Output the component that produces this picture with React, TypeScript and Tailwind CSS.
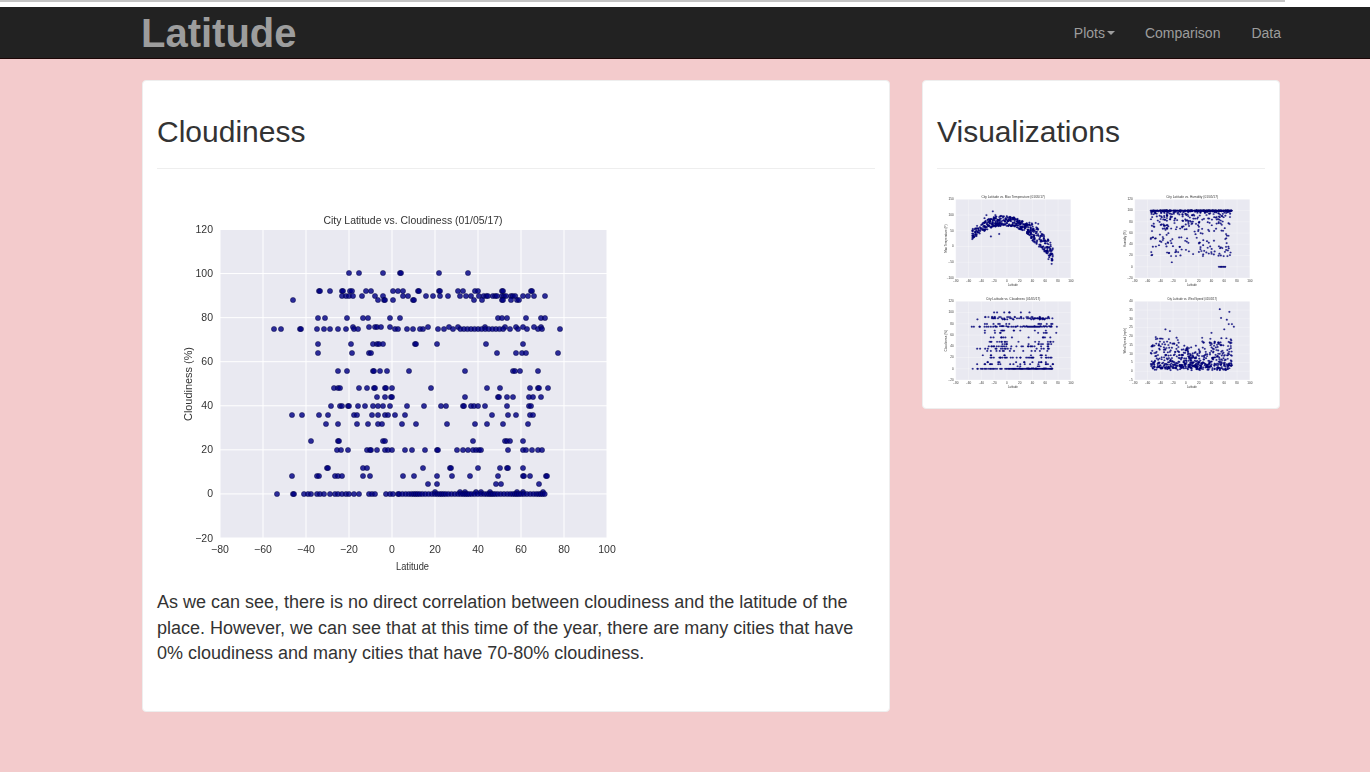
import React from "react";

type Pt = [number, number];

// pixel rows of the cloudiness scatter, read off the page (y, then x positions)
const run = (from: number, to: number, step: number) => {
  const out: number[] = [];
  for (let x = from; x <= to; x += step) out.push(x + 1.1 * Math.sin(x * 7));
  return out;
};

const rows: [number, number[]][] = [
  [273, [349, 359, 383, 400, 401, 439, 468]],
  [291, [319, 320, 330, 342, 343, 350, 352, 366, 371, 393, 398, 403, 418, 419, 439, 440, 458, 463, 475, 478, 502, 503, 531, 532]],
  [296, [342, 346, 349, 353, 362, 375, 383, 403, 408, 426, 433, 440, 448, 460, 466, 471, ...run(480, 517, 3), 523, 528, 534, 545]],
  [300, [293, 378, 384, 385, 393, 413, 414, 474, 482, 502, 503, 511, 517, 519]],
  [318, [318, 325, 347, 363, 368, 390, 400, 498, 502, 507, 526, 541, 545]],
  [327, [353, 369, 375, 377, 381, 390, 428, 449, 458, 485, 505, 516, 523, 534, 541]],
  [329, [274, 281, 300, 301, 317, 324, 330, 338, 346, 354, 358, 395, 398, 407, 413, 420, 423, 438, 444, 453, ...run(461, 505, 3.6), 510, 518, 527, 538, 542, 560]],
  [344, [318, 351, 373, 377, 379, 383, 415, 416, 437, 486, 523]],
  [353, [318, 352, 369, 371, 497, 516, 522, 526, 558]],
  [371, [338, 347, 373, 374, 380, 387, 409, 465, 513, 515, 520, 538]],
  [388, [334, 338, 340, 359, 367, 374, 375, 385, 386, 392, 431, 487, 500, 530, 538, 539, 548]],
  [397, [377, 385, 391, 392, 465, 498, 499, 507, 513, 529, 533, 541]],
  [406, [331, 340, 342, 348, 349, 358, 365, 373, 378, 383, 390, 407, 424, 441, 446, 463, 464, 471, 474, 478, 485, 507, 529, 531]],
  [415, [292, 302, 319, 328, 354, 357, 372, 378, 385, 388, 395, 405, 492, 508, 516, 530, 533]],
  [424, [326, 338, 357, 368, 378, 382, 402, 416, 447, 475, 487, 503, 528]],
  [441, [311, 338, 339, 383, 385, 473, 505, 507, 510, 523]],
  [450, [337, 341, 348, 367, 370, 371, 377, 385, 388, 392, 405, 412, 425, 437, 438, 457, 463, 468, 473, 476, 479, 481, 508, 523, 526, 532, 538, 542]],
  [468, [327, 328, 363, 367, 423, 450, 451, 478, 500, 507, 508, 523]],
  [476, [292, 317, 319, 335, 338, 342, 363, 370, 403, 414, 437, 452, 470, 498, 523, 524, 530, 546, 547]],
  [484, [428, 437, 496, 501, 539]],
  [492, [435, 460, 465, 476, 481, 490, 517, 523, 543]],
  [494, [277, 293, 294, 304, 308, 311, 317, 320, 324, 330, 335, 338, 342, 346, 349, 354, 359, 369, 372, 375, 386, 390, 393, 398, ...run(400, 547, 2.6)]],
];

const cloudiness: Pt[] = rows.flatMap(([y, xs]) => xs.map((x): Pt => [x - 157, y - 189]));

// the thumbnails are too small to read dot by dot, so these are seeded
function seeded(seed: number) {
  let s = seed;
  return () => {
    s = (s + 0x6d2b79f5) | 0;
    let t = Math.imul(s ^ (s >>> 15), 1 | s);
    t = (t + Math.imul(t ^ (t >>> 7), 61 | t)) ^ t;
    return ((t ^ (t >>> 14)) >>> 0) / 4294967296;
  };
}

const toBox = (lat: number, v: number, min: number, max: number): Pt => [
  63 + (lat + 80) * 2.15,
  40.5 + ((max - v) * 308.5) / (max - min),
];

const latOf = (r: () => number) => (r() < 0.12 ? -55 + r() * 20 : -35 + r() * 107);

const temperature: Pt[] = (() => {
  const r = seeded(11);
  const pts = Array.from({ length: 520 }, () => {
    const lat = latOf(r);
    const spread = lat > 35 ? 55 : 32;
    return toBox(lat, 82 - 0.018 * (lat + 5) * (lat + 5) + (r() - 0.5) * spread, -100, 150);
  });
  const extra: [number, number][] = [[-22, 112], [-18, 100], [-32, 100], [-35, 90], [45, 75], [49, 72], [-25, 32], [-12, 40], [70, -55], [65, -40]];
  return [...pts, ...extra.map(([a, b]) => toBox(a, b, -100, 150))];
})();

const humidity: Pt[] = (() => {
  const r = seeded(23);
  const pts = Array.from({ length: 540 }, () => {
    const lat = latOf(r);
    const k = r();
    const v = k < 0.28 ? 100 : 100 - Math.pow(r(), 2.2) * 82;
    return toBox(lat, v, -20, 120);
  });
  return [...pts, ...run(52, 62, 1.4).map((lat) => toBox(lat, 0, -20, 120)), toBox(-22, 8, -20, 120)];
})();

const wind: Pt[] = (() => {
  const r = seeded(37);
  const pts = Array.from({ length: 560 }, () => {
    const lat = latOf(r);
    const edge = lat < -10 || lat > 25 ? 1 : 0.7;
    return toBox(lat, 0.6 + r() * 3 + Math.pow(r(), 2.4) * 17 * edge, -5, 40);
  });
  const extra: [number, number][] = [[53, 35.5], [68, 34], [55, 30.5], [64, 29.5], [67, 27], [72, 27], [75, 25.5], [-32, 24], [-25, 23], [40, 22], [60, 24]];
  return [...pts, ...extra.map(([a, b]) => toBox(a, b, -5, 40))];
})();

type ChartProps = {
  title: string;
  titleLen: number;
  yLabel: string;
  yLabelLen: number;
  yTicks: number[];
  points: Pt[];
  dot: number;
  className: string;
};

const xTicks = [-80, -60, -40, -20, 0, 20, 40, 60, 80, 100];
const label = (n: number) => (n < 0 ? `\u2212${-n}` : `${n}`);

const Chart = ({ title, titleLen, yLabel, yLabelLen, yTicks, points, dot, className }: ChartProps) => {
  const yAt = (i: number) => 40.5 + (i * 308.5) / (yTicks.length - 1);
  return (
    <svg viewBox="0 0 501 400" preserveAspectRatio="none" className={className}>
      <g fontFamily="'Liberation Sans', Arial, sans-serif" fontSize="10.5" fill="#333">
        <rect x="63" y="40.5" width="387" height="308.5" fill="#e9e9f1" />
        {xTicks.map((t, i) => (
          <line key={t} x1={63 + i * 43} x2={63 + i * 43} y1="40.5" y2="349" stroke="#fff" strokeWidth="1" />
        ))}
        {yTicks.map((t, i) => (
          <line key={t} x1="63" x2="450" y1={yAt(i)} y2={yAt(i)} stroke="#fff" strokeWidth="1" />
        ))}
        {xTicks.map((t, i) => (
          <text key={t} x={63 + i * 43} y="364" textAnchor="middle">
            {label(t)}
          </text>
        ))}
        {[...yTicks].reverse().map((t, i) => (
          <text key={t} x="56" y={yAt(i) + 3.5} textAnchor="end">
            {label(t)}
          </text>
        ))}
        <text x="256" y="35" textAnchor="middle" fontSize="11.5" textLength={titleLen} lengthAdjust="spacingAndGlyphs">
          {title}
        </text>
        <text x="255.5" y="381" textAnchor="middle" fontSize="11.5" textLength="33" lengthAdjust="spacingAndGlyphs">
          Latitude
        </text>
        <text
          transform="translate(35 195) rotate(-90)"
          textAnchor="middle"
          fontSize="11.5"
          textLength={yLabelLen}
          lengthAdjust="spacingAndGlyphs"
        >
          {yLabel}
        </text>
        {points.map(([x, y], i) => (
          <circle
            key={i}
            cx={x}
            cy={y}
            r={dot}
            fill="#000085"
            fillOpacity="0.82"
            stroke="#00003a"
            strokeOpacity="0.7"
            strokeWidth="0.6"
          />
        ))}
      </g>
    </svg>
  );
};

const cloudTicks = [-20, 0, 20, 40, 60, 80, 100, 120];

const NavLink = ({ children }: { children: React.ReactNode }) => (
  <a className="text-sm text-[#9d9d9d]">{children}</a>
);

const thumbClass = "block h-[102px] w-[149px] blur-[0.5px]";

export default function App() {
  return (
    <div className="min-h-screen bg-[#f3cbcc] font-['Liberation_Sans',Arial,sans-serif] text-[#333]">
      <div className="h-[7px] bg-white">
        <div className="h-[2px] w-[1285px] bg-[#c4c4c4]" />
      </div>
      <nav className="h-[52px] border-b border-[#1c0606] bg-[#222]">
        <div className="ml-[142px] flex h-full w-[1139px] items-center justify-between">
          <a className="-ml-px text-[40px] leading-[50px] font-bold text-[#9d9d9d]">Latitude</a>
          <div className="flex items-center gap-[30px]">
            <div className="flex items-center gap-[2px]">
              <NavLink>Plots</NavLink>
              <span className="mt-[1px] h-0 w-0 border-x-4 border-t-4 border-x-transparent border-t-[#9d9d9d]" />
            </div>
            <NavLink>Comparison</NavLink>
            <div className="ml-px">
              <NavLink>Data</NavLink>
            </div>
          </div>
        </div>
      </nav>

      <div className="mt-[21px] ml-[142px] flex items-start gap-[32px]">
        <section className="w-[748px] rounded border border-[#eee] bg-white px-[14px] pb-[44px]">
          <h1 className="mt-[34px] border-b border-[#eee] pb-[20px] text-[30px] leading-[33px]">Cloudiness</h1>
          <Chart
            title="City Latitude vs. Cloudiness (01/05/17)"
            titleLen={179}
            yLabel="Cloudiness (%)"
            yLabelLen={74}
            yTicks={cloudTicks}
            points={cloudiness}
            dot={2.6}
            className="mt-[20px] block h-[400px] w-[501px] blur-[0.25px]"
          />
          <p className="mt-px text-lg leading-[25.714px]">
            As we can see, there is no direct correlation between cloudiness and the latitude of the place. However, we
            can see that at this time of the year, there are many cities that have 0% cloudiness and many cities that
            have 70-80% cloudiness.
          </p>
        </section>

        <section className="w-[358px] rounded border border-[#eee] bg-white px-[14px] pb-[15px]">
          <h1 className="mt-[34px] border-b border-[#eee] pb-[20px] text-[30px] leading-[33px]">Visualizations</h1>
          <div className="mt-[20px] grid grid-cols-2 gap-x-[30px]">
            <Chart
              title="City Latitude vs. Max Temperature (01/05/17)"
              titleLen={213}
              yLabel="Max Temperature (F)"
              yLabelLen={111}
              yTicks={[-100, -50, 0, 50, 100, 150]}
              points={temperature}
              dot={3.3}
              className={thumbClass}
            />
            <Chart
              title="City Latitude vs. Humidity (01/05/17)"
              titleLen={174}
              yLabel="Humidity (%)"
              yLabelLen={65}
              yTicks={cloudTicks}
              points={humidity}
              dot={3.3}
              className={thumbClass}
            />
            <Chart
              title="City Latitude vs. Cloudiness (01/05/17)"
              titleLen={182}
              yLabel="Cloudiness (%)"
              yLabelLen={85}
              yTicks={cloudTicks}
              points={cloudiness}
              dot={3.3}
              className={thumbClass}
            />
            <Chart
              title="City Latitude vs. Wind Speed (01/05/17)"
              titleLen={168}
              yLabel="Wind Speed (mph)"
              yLabelLen={100}
              yTicks={[-5, 0, 5, 10, 15, 20, 25, 30, 35, 40]}
              points={wind}
              dot={3.3}
              className={thumbClass}
            />
          </div>
        </section>
      </div>
    </div>
  );
}
